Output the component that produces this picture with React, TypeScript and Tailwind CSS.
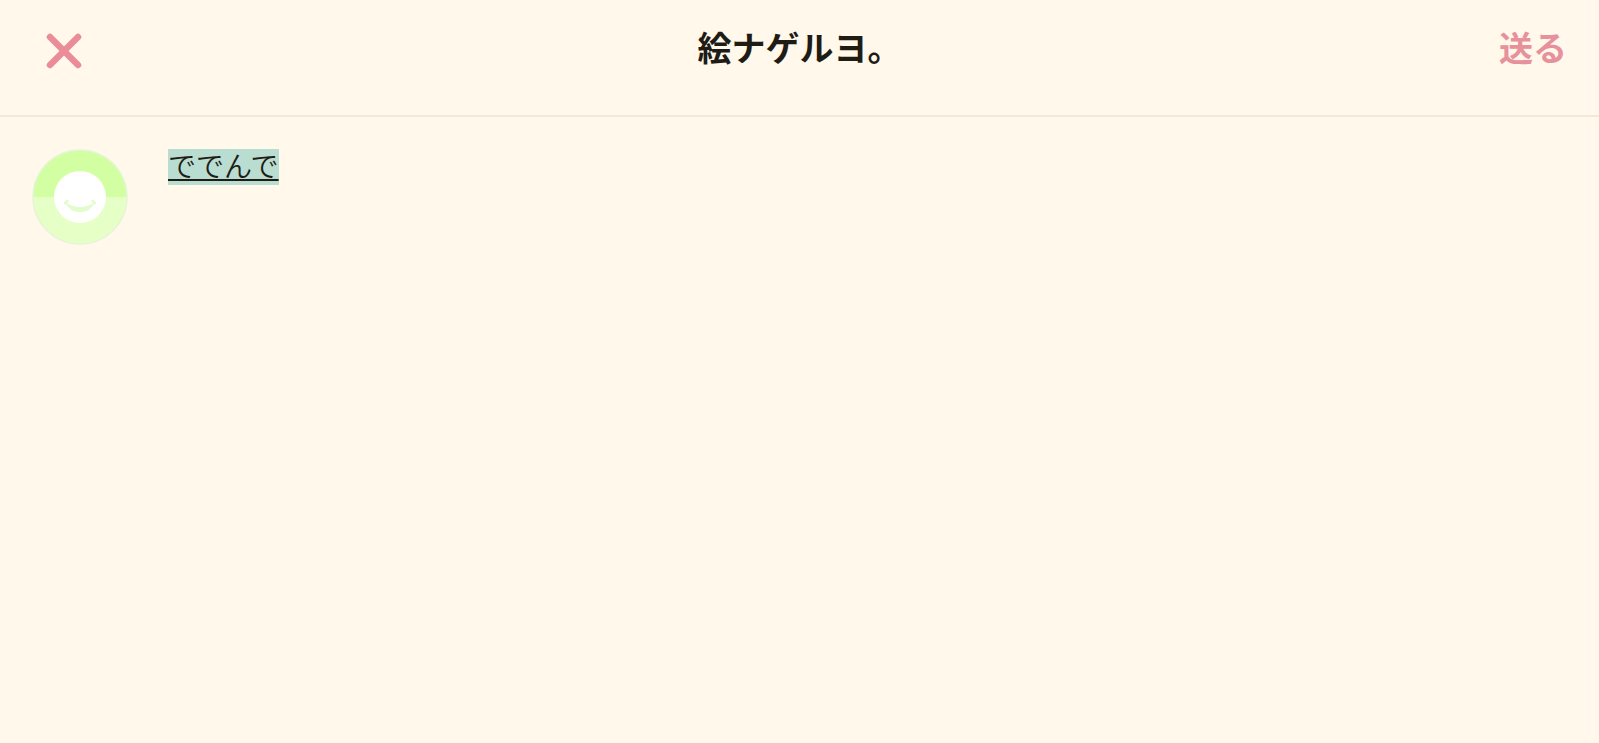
import React, { useState } from 'react';

const CloseIcon = () => (
   <svg viewBox="0 0 36 36" className="w-9 h-9" fill="none" stroke="#ea8d98" strokeWidth="6.5" strokeLinecap="round" aria-hidden="true">
      <path d="M4 4L32 32M32 4L4 32" />
   </svg>
);

const Avatar = () => (
   <svg viewBox="0 0 96 96" className="w-24 h-24 shrink-0" role="img" aria-label="プロフィール">
      <circle cx="48" cy="48" r="47" fill="#e5ffc6" />
      <path d="M1 48a47 47 0 0 1 94 0z" fill="#d2ffa2" />
      <circle cx="48" cy="48" r="47" fill="none" stroke="#e6f5d6" strokeWidth="1.5" />
      <circle cx="48" cy="48" r="26" fill="#ffffff" />
      {/* Smile */}
      <path d="M34 53.500Q39 58.500 48 58.500T62 53.500Q59 62.500 48 62.500T34 53.500z" fill="#e2fccb" stroke="#e2fccb" strokeLinejoin="round" />
      <path d="M33 54l2.500-2M63 54l-2.500-2" fill="none" stroke="#e2fccb" strokeWidth="2.5" strokeLinecap="round" />
   </svg>
);

const App = () => {
   const [text, setText] = useState('ででんで');

   return (
      <div lang="ja" className="min-h-screen bg-[#fff8eb] text-[#1f1c16] font-['Noto_Sans_CJK_JP',sans-serif]">

         {/* Header */}
         <header className="grid grid-cols-[1fr_auto_1fr] items-start px-8 pt-6 pb-[46px] border-b-2 border-[#f1e8da]">
            <button aria-label="閉じる" className="justify-self-start px-3.5 pt-[9px]">
               <CloseIcon />
            </button>
            <h1 className="text-[34px] leading-[45px] font-bold">絵ナゲルヨ。</h1>
            <button className="justify-self-end text-[34px] leading-[45px] font-bold text-[#e6919b]">送る</button>
         </header>

         {/* Composer */}
         <main className="flex items-start p-8 gap-10">
            <Avatar />
            <textarea
               aria-label="本文"
               rows={1}
               value={text}
               onChange={(e) => setText(e.target.value)}
               className="field-sizing-content max-w-full resize-none overflow-hidden outline-none pb-1 bg-[#b9ddd0] text-[28px] leading-8 font-[350] underline decoration-2 underline-offset-2"
            />
         </main>

      </div>
   );
};

export default App;
